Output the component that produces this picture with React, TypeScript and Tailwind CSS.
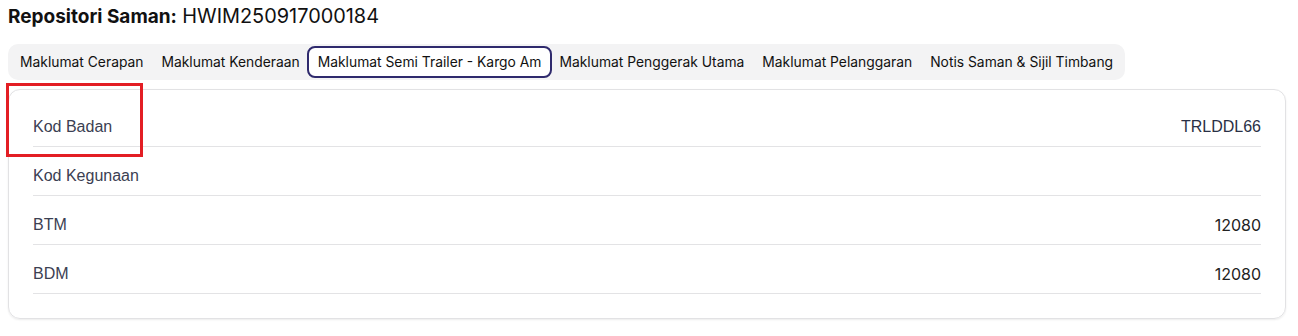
const tabs = [
  'Maklumat Cerapan',
  'Maklumat Kenderaan',
  'Maklumat Semi Trailer - Kargo Am',
  'Maklumat Penggerak Utama',
  'Maklumat Pelanggaran',
  'Notis Saman & Sijil Timbang',
];

const rows = [
  { label: 'Kod Badan', value: 'TRLDDL66', num: false },
  { label: 'Kod Kegunaan', value: '', num: false },
  { label: 'BTM', value: '12080', num: true },
  { label: 'BDM', value: '12080', num: true },
];

export default function App() {
  const active = 2;

  return (
    <div className="bg-white w-[1298px] h-[336px] px-[8px] pt-[4px] font-['Inter',sans-serif] text-[#111]">
      <h1 className="text-[19px] leading-[24px]">
        <span className="font-bold">Repositori Saman:</span> <span className="text-[19.9px]">HWIM250917000184</span>
      </h1>

      <div className="mt-[15px] inline-flex items-center h-[36px] bg-[#f3f3f4] rounded-[10px] px-[3px]">
        {tabs.map((t, i) => (
          <div
            key={t}
            className={
              i === active
                ? 'h-[32px] -mx-[2px] flex items-center px-[9px] bg-white border-2 border-[#2f2a6d] rounded-[8px] text-[13.85px] text-[#111]'
                : 'h-[32px] flex items-center px-[9px] text-[13.85px] text-[#111]'
            }
          >
            {t}
          </div>
        ))}
      </div>

      <div className="relative mt-[9px] w-[1278px] h-[230px] border border-[#e2e2e4] rounded-[12px] shadow-[0_1px_2px_rgba(0,0,0,0.08)] px-[24px] pt-[8px]">
        {rows.map((r) => (
          <div
            key={r.label}
            className="h-[49px] pt-[9px] flex items-center justify-between border-b border-[#e3e3e5] text-[16px]"
          >
            <span className="font-['Liberation_Sans',sans-serif] text-[#3b4052]">{r.label}</span>
            <span className={r.num ? 'text-[#222]' : "font-['Liberation_Sans',sans-serif] text-[#2a3045]"}>
              {r.value}
            </span>
          </div>
        ))}
        <div className="absolute left-[-3px] top-[-7px] w-[137px] h-[74px] border-[3px] border-[#e31e24]" />
      </div>
    </div>
  );
}
